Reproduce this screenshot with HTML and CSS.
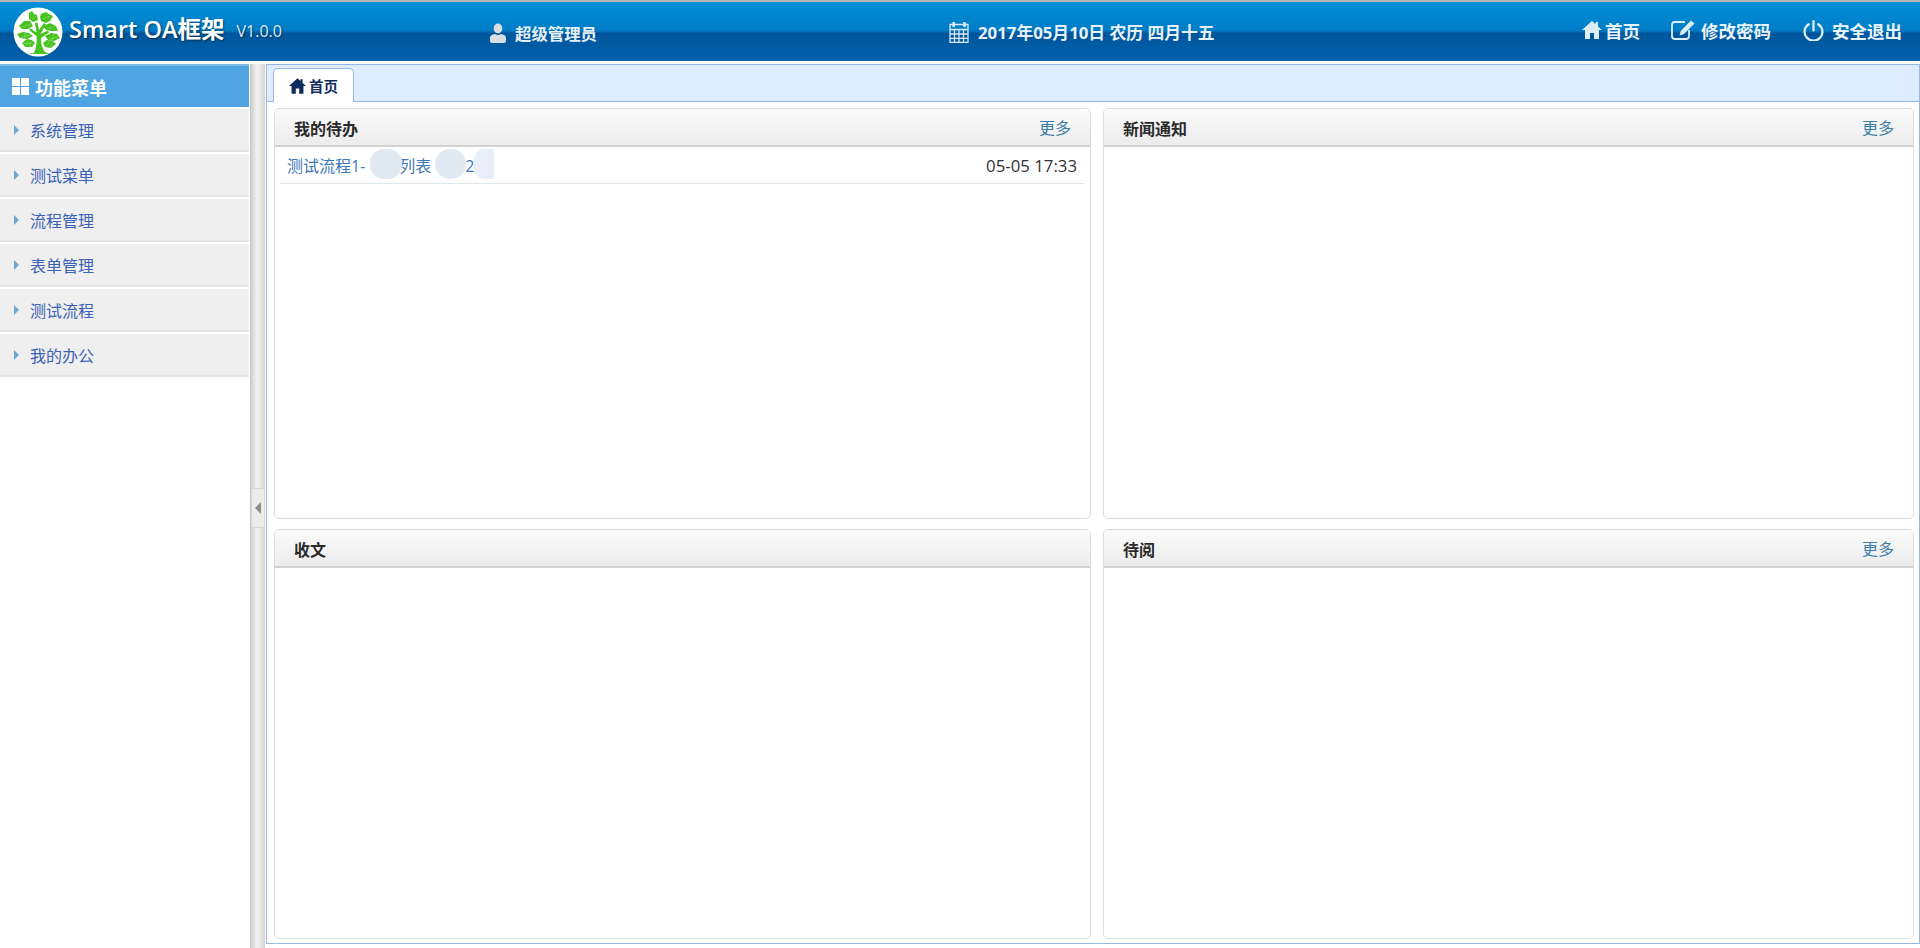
FILE: index.html
```html
<!DOCTYPE html>
<html lang="zh">
<head>
<meta charset="utf-8">
<title>Smart OA框架</title>
<link rel="stylesheet" href="styles.css">
</head>
<body>
<svg class="defs" width="0" height="0">
  <symbol id="home" viewBox="0 0 20 18"><path d="M10 0 L13.500 3.200 V1 H16 V5.500 L20 9 H17 V18 H12 V12 H8 V18 H3 V9 H0 Z"/></symbol>
</svg>
<header class="topbar">
  <div class="brand">
    <svg class="logo" viewBox="0 0 50 50">
      <circle cx="25" cy="25" r="24.500" fill="#fff"/>
      <g fill="#47c21f">
        <path d="M21 46 C23.500 40 24 35 23.500 29 L16 23 L17.500 21.500 L23.500 25.500 L22 16 L24.500 15.500 L26 23 L31 16 L33 17.500 L27.500 27 L35 23.500 L36 25.500 L28 31 C28 37 29 41 32 45 L37 47 H14 Z"/>
        <path d="M16 6 L19 4 L21 7 L24 8 L25 13 L20 15 L16 12 Z"/>
        <path d="M28 7 L33 5 L36 7 L40 9 L37 14 L33 16 L28 14 L27 10 Z"/>
        <path d="M6 19 L11 14 L17 14 L20 19 L15 22 L9 22 Z"/>
        <path d="M30 19 L37 16 L43 19 L45 24 L38 24 L33 23 Z"/>
        <path d="M4 27 L10 25 L16 26 L20 29 L14 32 L7 31 Z"/>
        <path d="M32 29 L38 26 L44 27 L47 31 L41 34 L35 33 Z"/>
        <path d="M9 36 L14 32 L19 33 L22 36 L19 40 L12 40 Z"/>
        <path d="M30 36 L34 33 L40 34 L43 37 L38 41 L32 40 Z"/>
      </g>
      <g class="logo-veins">
        <path d="M10 37 L20 36 M12 40 L15 34 M16 40 L18 34 M33 40 L37 34 M37 40 L40 35 M8 30 L18 28 M11 31 L13 26 M36 32 L45 30 M39 33 L41 27 M9 20 L18 17 M34 22 L42 19 M19 12 L23 9 M30 12 L37 9"/>
      </g>
    </svg>
    <span class="brand-name">Smart OA框架</span>
    <span class="brand-ver">V1.0.0</span>
  </div>
  <div class="user">
    <svg class="icon-user" viewBox="0 0 16 20"><ellipse cx="8" cy="5.500" rx="4.300" ry="5"/><path d="M0 18 V15 C0 12.500 2.500 11.500 5 11 C6.500 12.200 9.500 12.200 11 11 C13.500 11.500 16 12.500 16 15 V18 Q16 20 14 20 H2 Q0 20 0 18 Z"/></svg>
    <span>超级管理员</span>
  </div>
  <div class="date">
    <svg class="icon-cal" viewBox="0 0 20 22"><path d="M1 3.500 H19 V21.500 H1 Z M4.500 1 V6 M15.500 1 V6 M1 8.500 H19 M1 13 H19 M1 17.300 H19 M5.500 8.500 V21.500 M10 8.500 V21.500 M14.500 8.500 V21.500" fill="none" stroke="#dbe9f5" stroke-width="1.300"/><path d="M3.500 1 H6 V6 H3.500 Z M14.300 1 H16.800 V6 H14.300 Z" fill="#dbe9f5"/></svg>
    <span>2017年05月10日 农历 四月十五</span>
  </div>
  <nav class="actions">
    <a class="action a-home"><svg class="icon-home"><use href="#home"/></svg><span>首页</span></a>
    <a class="action a-pwd">
      <svg class="icon-edit" viewBox="0 0 24 20" fill="none" stroke="#dcedf6" stroke-width="1.800"><path d="M14 2 H4 A3 3 0 0 0 1 5 V16 A3 3 0 0 0 4 19 H15 A3 3 0 0 0 18 16 V10"/><path d="M20 0.500 L23.500 3.500 L13 14 L8.500 15.500 L9.800 11 Z" fill="#dcedf6" stroke="none"/></svg>
      <span>修改密码</span>
    </a>
    <a class="action a-exit">
      <svg class="icon-power" viewBox="0 0 20 20" fill="none" stroke="#dcedf6" stroke-width="2.200" stroke-linecap="round"><path d="M10 1.200 V10"/><path d="M5.500 4 A8.500 8.500 0 1 0 14.500 4"/></svg>
      <span>安全退出</span>
    </a>
  </nav>
</header>
<div class="body-row">
  <aside class="side">
    <div class="side-title">
      <span class="grid-icon"><i></i><i></i><i></i><i></i></span>
      <span>功能菜单</span>
    </div>
    <ul class="menu">
      <li class="menu-item"><i class="arrow"></i>系统管理</li>
      <li class="menu-item"><i class="arrow"></i>测试菜单</li>
      <li class="menu-item"><i class="arrow"></i>流程管理</li>
      <li class="menu-item"><i class="arrow"></i>表单管理</li>
      <li class="menu-item"><i class="arrow"></i>测试流程</li>
      <li class="menu-item"><i class="arrow"></i>我的办公</li>
    </ul>
  </aside>
  <div class="splitter"><button class="collapse"><i></i></button></div>
  <main class="center">
    <div class="tabs">
      <div class="tab"><svg class="icon-tab"><use href="#home"/></svg><span>首页</span></div>
    </div>
    <div class="portal">
      <section class="panel">
        <div class="panel-head"><h2>我的待办</h2><a class="more">更多</a></div>
        <div class="panel-body">
          <div class="todo">
            <a class="todo-link">测试流程1-<span class="masked"></span>列表<span class="masked"></span>2</a>
            <span class="todo-time">05-05 17:33</span>
            <i class="blot blot-1"></i><i class="blot blot-2"></i><i class="blot blot-3"></i>
          </div>
        </div>
      </section>
      <section class="panel">
        <div class="panel-head"><h2>新闻通知</h2><a class="more">更多</a></div>
        <div class="panel-body"></div>
      </section>
      <section class="panel">
        <div class="panel-head"><h2>收文</h2></div>
        <div class="panel-body"></div>
      </section>
      <section class="panel">
        <div class="panel-head"><h2>待阅</h2><a class="more">更多</a></div>
        <div class="panel-body"></div>
      </section>
    </div>
  </main>
</div>
</body>
</html>
```
FILE: styles.css
```css
* { box-sizing: border-box; }
html, body { margin: 0; height: 100%; }
body {
  display: flex;
  flex-direction: column;
  height: 948px;
  overflow: hidden;
  background: #fff;
  font-family: "Open Sans", "Noto Sans CJK SC", sans-serif;
  font-size: 16px;
}
.defs { position: absolute; }

.topbar {
  flex: none;
  height: 61px;
  display: flex;
  align-items: center;
  position: relative;
  border-top: 2px solid #b5b5b5;
  color: #fff;
  background: linear-gradient(#0090d9 0, #007cc6 48%, #00569c 53%, #0061ad 100%);
}
.brand { display: flex; align-items: center; width: 490px; padding-left: 13px; }
.logo { width: 50px; height: 50px; flex: none; }
.logo-veins { stroke: #fff; stroke-width: .4; stroke-opacity: .6; fill: none; }
.brand-name {
  margin-left: 6px;
  padding-bottom: 5px;
  font-size: 23.500px;
  font-weight: 600;
  line-height: 30px;
  text-shadow: 1px 1px 2px rgba(0,0,0,.45);
  white-space: nowrap;
}
.brand-ver { margin-left: 12px; padding-bottom: 2px; font-size: 16px; color: #dfe9f2; text-shadow: 1px 1px 2px rgba(0,0,0,.45); }
.user { width: 459px; display: flex; align-items: center; gap: 9px; font-size: 16.400px; font-weight: 700; color: #e6eff6; padding-top: 3px; }
.icon-user { width: 16px; height: 20px; fill: #d9dee3; }
.date { display: flex; align-items: center; gap: 9px; font-size: 16.800px; font-weight: 700; color: #e6f0f8; padding-top: 1px; white-space: nowrap; }
.icon-cal { width: 20px; height: 22px; }
.actions { margin-left: auto; display: flex; align-items: center; padding-right: 18px; padding-bottom: 3px; font-size: 17.500px; font-weight: 700; color: #e8f3fa; }
.action { display: flex; align-items: center; white-space: nowrap; }
.a-home { gap: 3px; }
.a-pwd { margin-left: 31px; gap: 6px; }
.a-exit { margin-left: 32px; gap: 8px; }
.icon-home { width: 20px; height: 18px; fill: #dcedf6; }
.icon-edit { width: 24px; height: 20px; }
.icon-power { width: 21px; height: 21px; }

.body-row { flex: 1; min-height: 0; display: flex; padding-top: 3px; }
.side { width: 250px; flex: none; background: #fff; border-right: 1px solid #fff; }
.side-title {
  height: 43px;
  display: flex;
  align-items: center;
  gap: 6px;
  padding-left: 12px;
  background: #4fa5e2;
  border-top: 2px solid #7dbbe9;
  color: #fff;
  font-size: 18px;
  font-weight: 700;
}
.grid-icon { display: grid; grid-template-columns: 8px 8px; grid-auto-rows: 8px; gap: 1px; }
.grid-icon i { background: #fff; }
.menu { list-style: none; margin: 2px 0 0; padding: 0; }
.menu-item {
  height: 43px;
  margin-bottom: 2px;
  display: flex;
  align-items: center;
  padding-left: 14px;
  padding-top: 1px;
  background: #efefef;
  border-bottom: 2px solid #e3e3e3;
  color: #3a62b5;
  font-size: 16px;
}
.arrow {
  width: 0; height: 0;
  margin-right: 11px;
  border-left: 5px solid #6fa7d4;
  border-top: 5px solid transparent;
  border-bottom: 5px solid transparent;
}

.splitter {
  width: 15px;
  flex: none;
  position: relative;
  border-left: 1px solid #c8c8c8;
  background: linear-gradient(90deg, #cfcfcf, #f4f4f4 45%, #d4d4d4);
}
.collapse {
  position: absolute;
  left: 0;
  top: 424px;
  width: 14px;
  height: 40px;
  padding: 0;
  display: flex;
  align-items: center;
  justify-content: center;
  background: #ececec;
  border: 1px solid #d6d6d6;
  border-radius: 3px;
}
.collapse i {
  width: 0; height: 0;
  border-right: 6px solid #8c8c8c;
  border-top: 6px solid transparent;
  border-bottom: 6px solid transparent;
}

.center {
  flex: 1;
  min-width: 0;
  display: flex;
  flex-direction: column;
  margin: 0 0 4px 1px;
  border: 1px solid #95b8e7;
  border-top: none;
}
.tabs {
  flex: none;
  height: 38px;
  display: flex;
  align-items: flex-end;
  padding-left: 6px;
  background: #dfecff;
  border-top: 1px solid #95b8e7;
  border-bottom: 1px solid #95b8e7;
}
.tab {
  width: 81px;
  height: 34px;
  margin-bottom: -1px;
  display: flex;
  align-items: center;
  justify-content: center;
  gap: 3px;
  background: #fff;
  border: 1px solid #95b8e7;
  border-bottom: none;
  border-radius: 5px 5px 0 0;
  color: #0e2d5f;
  font-size: 14.500px;
  font-weight: 700;
}
.icon-tab { width: 17px; height: 16px; fill: #0e2d5f; }
.portal {
  flex: 1;
  min-height: 0;
  display: grid;
  grid-template-columns: 817px 811px;
  grid-template-rows: 411px 410px;
  column-gap: 12px;
  row-gap: 10px;
  padding: 6px 0 0 7px;
}
.panel {
  display: flex;
  flex-direction: column;
  border: 1px solid #dcdcdc;
  border-radius: 5px;
  overflow: hidden;
  background: #fff;
}
.panel-head {
  flex: none;
  height: 38px;
  display: flex;
  align-items: center;
  justify-content: space-between;
  padding: 0 19px 0 19px;
  background: linear-gradient(#fbfbfb, #ececec);
  border-bottom: 2px solid #d2d2d2;
}
.panel-head h2 { margin: 0; padding-top: 2px; font-size: 16px; font-weight: 700; color: #2a2a2a; }
.more { color: #3a7ca8; font-size: 16px; }
.panel-body { flex: 1; }
.todo {
  position: relative;
  height: 37px;
  margin: 0 6px 0 5px;
  padding: 0 7px 0 7px;
  display: flex;
  align-items: center;
  justify-content: space-between;
  border-bottom: 1px solid #dde7ea;
}
.todo-link { color: #3f78b8; font-size: 16px; }
.masked { display: inline-block; width: 34px; }
.todo-time { color: #333; font-size: 16.800px; }
.blot { position: absolute; top: 2px; height: 30px; background: #e1e9f2; }
.blot-1 { left: 90px; width: 32px; border-radius: 14px; }
.blot-2 { left: 155px; width: 31px; border-radius: 15px; }
.blot-3 { left: 194px; width: 20px; border-radius: 10px 0 0 10px; background: #e9eff6; }
```
